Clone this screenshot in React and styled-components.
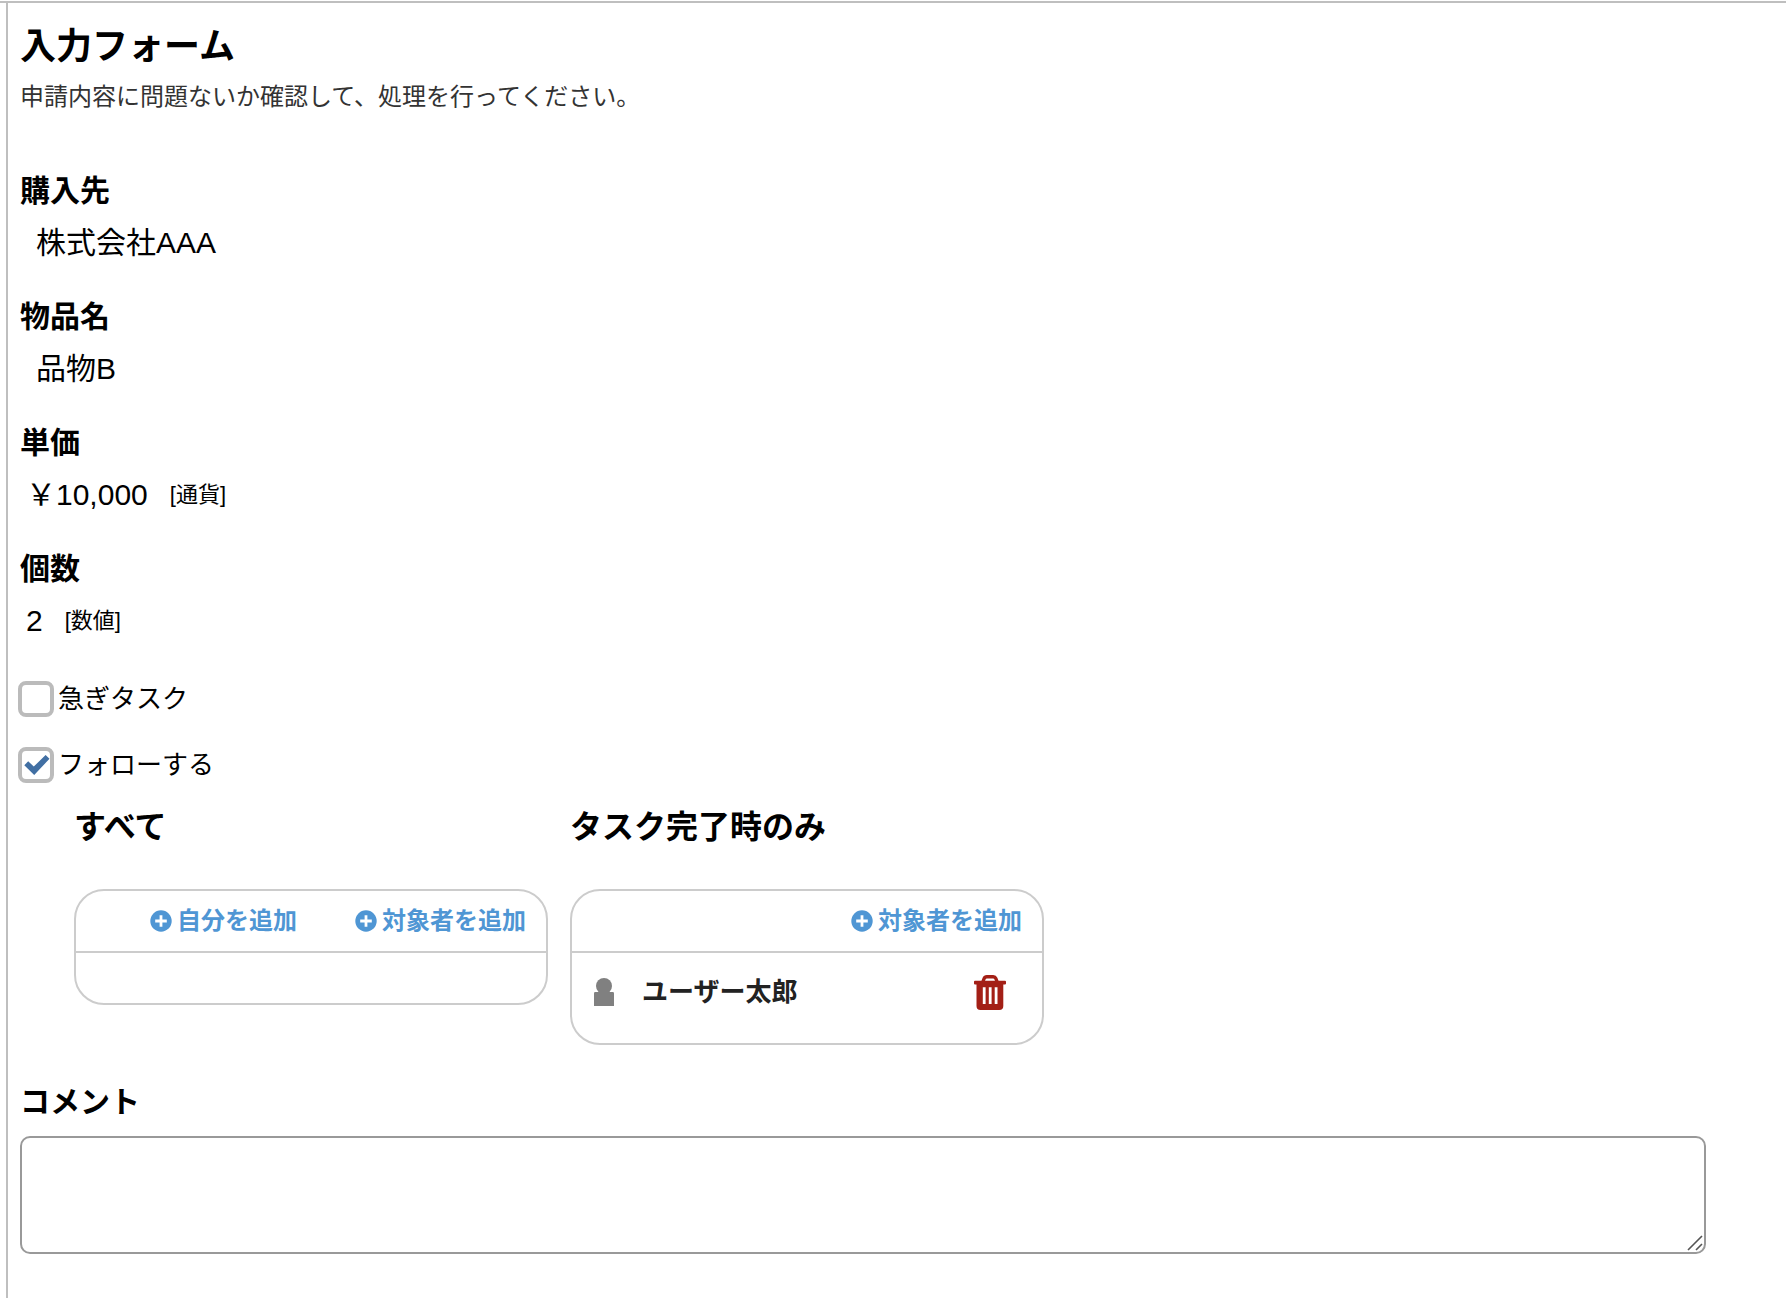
import { useState } from 'react'
import styled, { createGlobalStyle } from 'styled-components'

const GlobalStyle = createGlobalStyle`
  * {
    box-sizing: border-box;
  }

  body {
    margin: 0;
    background-color: #fff;
    color: #000;
    font-family: 'Liberation Sans', 'Noto Sans CJK JP', sans-serif;
  }

  h1, h2, p, dl, dt, dd, ul {
    margin: 0;
    padding: 0;
  }
`

const Page = styled.div`
  min-height: 100vh;
  display: flex;
  flex-direction: column;
  padding-top: 1px;
`

const Frame = styled.div`
  flex: 1;
  display: flex;
  border-top: 2px solid #bfbfbf;
  padding-left: 6px;
`

const Pane = styled.main`
  flex: 1;
  min-width: 0;
  border-left: 2px solid #bfbfbf;
  padding: 22px 80px 40px 12px;
`

const Title = styled.h1`
  font-size: 36px;
  line-height: 44px;
  font-weight: 700;
`

const Description = styled.p`
  margin-top: 10px;
  font-size: 24px;
  line-height: 36px;
  color: #333;
`

const FieldList = styled.dl`
  display: flex;
  flex-direction: column;
  gap: 34px;
  margin-top: 56px;
`

const FieldName = styled.dt`
  font-size: 30px;
  line-height: 40px;
  font-weight: 700;
`

const FieldValue = styled.dd`
  display: flex;
  align-items: center;
  gap: 22px;
  margin-top: 12px;
  padding-left: ${props => props.$numeric ? '6px' : '16px'};
  font-size: 30px;
  line-height: 40px;
`

const FieldType = styled.small`
  font-size: 22px;
`

const Options = styled.div`
  display: flex;
  flex-direction: column;
  align-items: flex-start;
  gap: 30px;
  margin: 40px 0 0 -2px;
`

const OptionLabel = styled.label`
  display: flex;
  align-items: center;
  gap: 4px;
  font-size: 26px;
  line-height: 36px;
  cursor: pointer;
`

const CheckWrap = styled.span`
  display: grid;

  input, svg {
    grid-area: 1 / 1;
  }

  svg {
    pointer-events: none;
  }
`

const CheckInput = styled.input`
  appearance: none;
  width: 36px;
  height: 36px;
  margin: 0;
  border: 4px solid #bbb;
  border-radius: 8px;
  background-color: #fff;
  cursor: pointer;
`

const Followers = styled.div`
  display: flex;
  flex-wrap: wrap;
  align-items: flex-start;
  gap: 22px;
  margin: 24px 0 0 54px;
`

const FollowGroup = styled.section`
  width: 474px;
`

const GroupTitle = styled.h2`
  font-size: 32px;
  line-height: 40px;
  font-weight: 700;
`

const Panel = styled.div`
  margin-top: 42px;
  border: 2px solid #ccc;
  border-radius: 30px;
  overflow: hidden;
`

const PanelHeader = styled.div`
  display: flex;
  align-items: center;
  justify-content: flex-end;
  gap: 58px;
  height: 62px;
  padding: 0 20px;
  border-bottom: 2px solid #ccc;
`

const AddButton = styled.button`
  display: flex;
  align-items: center;
  gap: 5px;
  padding: 0;
  border: none;
  background: none;
  color: #4f96d4;
  font-family: inherit;
  font-size: 24px;
  line-height: 36px;
  font-weight: 700;
  cursor: pointer;
`

const UserList = styled.ul`
  min-height: 50px;
  list-style: none;
`

const UserRow = styled.li`
  display: flex;
  align-items: center;
  height: 90px;
  padding: 0 36px 12px 22px;
`

const UserName = styled.span`
  flex: 1;
  margin-left: 28px;
  color: #222;
  font-size: 26px;
  line-height: 36px;
  font-weight: 700;
`

const DeleteButton = styled.button`
  display: flex;
  padding: 0;
  border: none;
  background: none;
  color: #a31f16;
  cursor: pointer;
`

const CommentLabel = styled.label`
  display: block;
  margin-top: 37px;
  font-size: 30px;
  line-height: 40px;
  font-weight: 700;
`

const CommentBox = styled.div`
  display: grid;
  margin-top: 14px;

  textarea, svg {
    grid-area: 1 / 1;
  }

  svg {
    place-self: end;
    margin: 3px;
    pointer-events: none;
  }
`

const CommentInput = styled.textarea`
  width: 100%;
  height: 118px;
  padding: 10px;
  border: 2px solid #999;
  border-radius: 10px;
  background-color: #fff;
  font-family: inherit;
  font-size: 26px;
  line-height: 36px;
  resize: vertical;

  &::-webkit-resizer {
    display: none;
  }
`

const CheckIcon = () => (
  <svg width="36" height="36" viewBox="0 0 36 36" aria-hidden="true">
    <path d="M6.3 18.2L10.2 14.3L15.8 19.6L27.6 7.9L31.5 11.8L16.2 27.9Z" fill="#416fa3" />
  </svg>
)

const PlusIcon = () => (
  <svg width="22" height="22" viewBox="0 0 22 22" aria-hidden="true">
    <circle cx="11" cy="11" r="10.7" fill="currentColor" />
    <path d="M11 5.2V16.8M5.2 11H16.8" stroke="#fff" strokeWidth="2.8" />
  </svg>
)

const PersonIcon = () => (
  <svg width="20" height="28" viewBox="0 0 20 28" aria-hidden="true">
    <g fill="#808080">
      <circle cx="10" cy="8" r="8" />
      <path d="M0 15.2Q0 14 1.2 14H18.8Q20 14 20 15.2V28H0Z" />
    </g>
  </svg>
)

const TrashIcon = () => (
  <svg width="32" height="35" viewBox="0 0 32 35" aria-hidden="true">
    <path d="M9 6.5L10.2 3.4Q10.9 1.7 12.8 1.7H19.2Q21.1 1.7 21.8 3.4L23 6.5" fill="none" stroke="currentColor" strokeWidth="3.4" />
    <path d="M1 5.8H31Q32 5.8 32 6.8V8.4Q32 9.4 31 9.4H29.3V31Q29.3 35 25.3 35H6.5Q2.5 35 2.5 31V9.4H1Q0 9.4 0 8.4V6.8Q0 5.8 1 5.8Z" fill="currentColor" />
    <path d="M10.2 12.2V29M16.2 12.2V29M22.1 12.2V29" stroke="#fff" strokeWidth="2.8" />
  </svg>
)

const ResizeGrip = () => (
  <svg width="16" height="16" viewBox="0 0 16 16" aria-hidden="true">
    <path d="M1 15L15 1M9 15L15 9" stroke="#555" strokeWidth="1.6" />
  </svg>
)

const fields = [
  { name: '購入先', value: '株式会社AAA' },
  { name: '物品名', value: '品物B' },
  { name: '単価', value: '￥10,000', type: '[通貨]' },
  { name: '個数', value: '2', type: '[数値]' }
]

function CheckOption({ label, checked, onChange }) {
  return (
    <OptionLabel>
      <CheckWrap>
        <CheckInput
          type="checkbox"
          checked={checked}
          onChange={(e) => onChange(e.target.checked)}
        />
        {checked && <CheckIcon />}
      </CheckWrap>
      {label}
    </OptionLabel>
  )
}

function FollowPanel({ title, actions, users, onRemove }) {
  return (
    <FollowGroup>
      <GroupTitle>{title}</GroupTitle>
      <Panel>
        <PanelHeader>
          {actions.map((action) => (
            <AddButton type="button" key={action}>
              <PlusIcon />
              {action}
            </AddButton>
          ))}
        </PanelHeader>
        <UserList>
          {users.map((user) => (
            <UserRow key={user}>
              <PersonIcon />
              <UserName>{user}</UserName>
              <DeleteButton type="button" aria-label="削除" onClick={() => onRemove(user)}>
                <TrashIcon />
              </DeleteButton>
            </UserRow>
          ))}
        </UserList>
      </Panel>
    </FollowGroup>
  )
}

function App() {
  const [urgent, setUrgent] = useState(false)
  const [follow, setFollow] = useState(true)
  const [users, setUsers] = useState(['ユーザー太郎'])
  const [comment, setComment] = useState('')

  const removeUser = (name) => {
    setUsers(users.filter((user) => user !== name))
  }

  return (
    <>
      <GlobalStyle />
      <Page lang="ja">
        <Frame>
          <Pane>
            <Title>入力フォーム</Title>
            <Description>申請内容に問題ないか確認して、処理を行ってください。</Description>

            <FieldList>
              {fields.map((field) => (
                <div key={field.name}>
                  <FieldName>{field.name}</FieldName>
                  <FieldValue $numeric={Boolean(field.type)}>
                    {field.value}
                    {field.type && <FieldType>{field.type}</FieldType>}
                  </FieldValue>
                </div>
              ))}
            </FieldList>

            <Options>
              <CheckOption label="急ぎタスク" checked={urgent} onChange={setUrgent} />
              <CheckOption label="フォローする" checked={follow} onChange={setFollow} />
            </Options>

            {follow && (
              <Followers>
                <FollowPanel title="すべて" actions={['自分を追加', '対象者を追加']} users={[]} />
                <FollowPanel
                  title="タスク完了時のみ"
                  actions={['対象者を追加']}
                  users={users}
                  onRemove={removeUser}
                />
              </Followers>
            )}

            <CommentLabel htmlFor="comment">コメント</CommentLabel>
            <CommentBox>
              <CommentInput
                id="comment"
                value={comment}
                onChange={(e) => setComment(e.target.value)}
              />
              <ResizeGrip />
            </CommentBox>
          </Pane>
        </Frame>
      </Page>
    </>
  )
}

export default App
